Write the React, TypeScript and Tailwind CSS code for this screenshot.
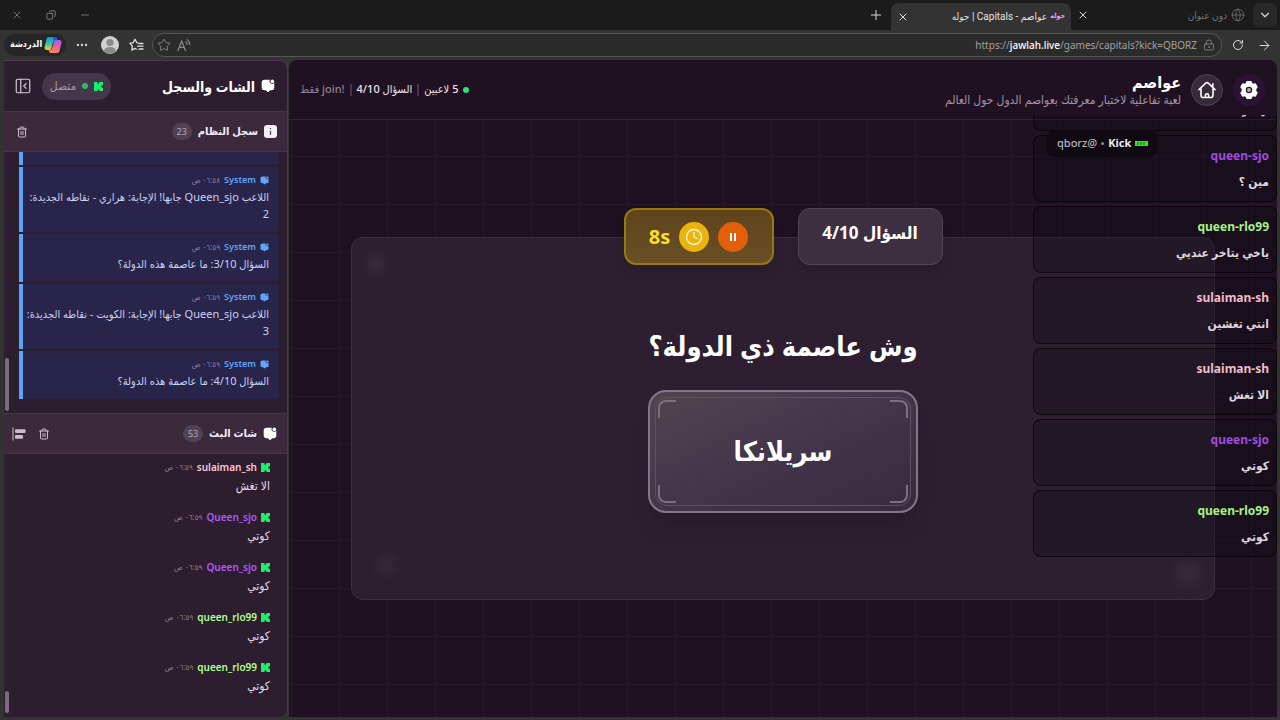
import React from 'react';
import {
    ArrowRight,
    ChevronDown,
    Clock,
    Copy,
    Ellipsis,
    Globe,
    LockKeyhole,
    Minus,
    PanelLeftClose,
    Plus,
    RotateCw,
    Star,
    Trash2,
    X,
} from 'lucide-react';

interface ChatMessage {
    name: string;
    text: string;
    color: string;
}

interface SystemMessage {
    time: string;
    text: string;
}

const QUESTION = 'السؤال 4/10';

const systemLog: SystemMessage[] = [
    { time: '٠٦:٥٨ ص', text: 'اللاعب Queen_sjo جابها! الإجابة: هراري - نقاطه الجديدة: 2' },
    { time: '٠٦:٥٩ ص', text: 'السؤال 3/10: ما عاصمة هذه الدولة؟' },
    { time: '٠٦:٥٩ ص', text: 'اللاعب Queen_sjo جابها! الإجابة: الكويت - نقاطه الجديدة: 3' },
    { time: '٠٦:٥٩ ص', text: 'السؤال 4/10: ما عاصمة هذه الدولة؟' },
];

const streamChat: ChatMessage[] = [
    { name: 'sulaiman_sh', text: 'الا تغش', color: 'text-[#ffc9d6]' },
    { name: 'Queen_sjo', text: 'كوتي', color: 'text-[#b25af5]' },
    { name: 'Queen_sjo', text: 'كوتي', color: 'text-[#b25af5]' },
    { name: 'queen_rlo99', text: 'كوتي', color: 'text-[#b5ff8f]' },
    { name: 'queen_rlo99', text: 'كوتي', color: 'text-[#b5ff8f]' },
];

const overlayChat: ChatMessage[] = [
    { name: 'queen-sjo', text: 'مين ؟', color: 'text-[#a04ddb]' },
    { name: 'queen-rlo99', text: 'ياخي يتاخر عنديي', color: 'text-[#a6f285]' },
    { name: 'sulaiman-sh', text: 'انتي تغشين', color: 'text-[#f0bccb]' },
    { name: 'sulaiman-sh', text: 'الا تغش', color: 'text-[#f0bccb]' },
    { name: 'queen-sjo', text: 'كوتي', color: 'text-[#a04ddb]' },
    { name: 'queen-rlo99', text: 'كوتي', color: 'text-[#a6f285]' },
];

function KickIcon({ className }: { className?: string }) {
    return (
        <svg viewBox="0 0 10 10" className={className} fill="#1bf06c" aria-hidden="true">
            <path d="M0 0h4v2.200h1V1h1V0h4v3.300H9v1H8v1.400h1v1h1V10H6V9H5V7.800H4V10H0z" />
        </svg>
    );
}

function ChatBubbleIcon({ className }: { className?: string }) {
    return (
        <svg viewBox="0 0 14 14" className={className} fill="currentColor" aria-hidden="true">
            <path d="M3.500.8h5.500a2.400 2.400 0 0 0 4.300 2.800v4.900a2.800 2.800 0 0 1-2.800 2.800H9.200L7 13.300l-2.200-2H3.500A2.800 2.800 0 0 1 .7 8.500V3.600A2.800 2.800 0 0 1 3.500.8z" />
            <circle cx="11.300" cy="2.400" r="1.800" />
        </svg>
    );
}

function CopilotIcon() {
    return (
        <svg viewBox="0 0 18 18" className="size-[18px]" aria-hidden="true">
            <defs>
                <linearGradient id="copilot-a" x1="0" y1="0" x2="0" y2="1">
                    <stop offset="0" stopColor="#1b8df2" />
                    <stop offset=".5" stopColor="#2fc5a0" />
                    <stop offset="1" stopColor="#f3d02f" />
                </linearGradient>
                <linearGradient id="copilot-b" x1="0" y1="0" x2="0" y2="1">
                    <stop offset="0" stopColor="#a35cf5" />
                    <stop offset=".5" stopColor="#ef5ba1" />
                    <stop offset="1" stopColor="#fd8a4b" />
                </linearGradient>
            </defs>
            <path d="M5 1h6c1.300 0 1.800.9 2.100 2l.5 1.700h-2.400c-1.300 0-1.900.8-2.300 2L7.500 12c-.4 1.300-1 2-2.300 2H3C1.100 14 .2 12.700.6 11L2.400 3.200C2.800 1.800 3.700 1 5 1z" fill="url(#copilot-a)" />
            <path d="M13 17H7c-1.300 0-1.800-.9-2.100-2l-.3-1h1.200c1.300 0 2-.8 2.400-2L9.900 6c.4-1.300 1-2 2.300-2H15c1.900 0 2.800 1.300 2.400 3l-1.800 7.800C15.200 16.200 14.300 17 13 17z" fill="url(#copilot-b)" />
            <path d="M9 1h2c1.300 0 1.800.9 2.100 2l.4 1.200h-2c-1.100 0-1.600.4-2 1.200z" fill="#2456d6" />
        </svg>
    );
}

function GearIcon() {
    return (
        <svg viewBox="0 0 20 20" className="size-5" aria-hidden="true">
            <path
                fill="currentColor"
                d="M7.300 1.600a1 1 0 0 1 1-.7h3.400a1 1 0 0 1 1 .7l.5 1.500 1 .6 1.600-.4a1 1 0 0 1 1.100.5l1.600 2.800a1 1 0 0 1-.1 1.200L17.300 9v2l1.100 1.200a1 1 0 0 1 .1 1.200l-1.600 2.800a1 1 0 0 1-1.100.5l-1.600-.4-1 .6-.5 1.500a1 1 0 0 1-1 .7H8.300a1 1 0 0 1-1-.7l-.5-1.500-1-.6-1.600.4a1 1 0 0 1-1.100-.5l-1.600-2.800a1 1 0 0 1 .1-1.200L2.700 11V9L1.600 7.800a1 1 0 0 1-.1-1.200l1.600-2.800a1 1 0 0 1 1.100-.5l1.600.4 1-.6z"
            />
            <circle cx="10" cy="10" r="2.600" fill="#b9aabd" stroke="#2b1433" strokeWidth="1.300" />
        </svg>
    );
}

function HomeIcon() {
    return (
        <svg viewBox="0 0 20 20" className="size-5" fill="none" stroke="currentColor" strokeWidth="1.600" strokeLinecap="round" strokeLinejoin="round" aria-hidden="true">
            <path d="M2 9.600 8.700 3.200a1.900 1.900 0 0 1 2.600 0L18 9.600M15.800 7.300V3.800M4 8.400v6.800a2.300 2.300 0 0 0 2.300 2.300h7.400a2.300 2.300 0 0 0 2.300-2.300V8.400M8.400 17.300v-2a1.600 1.600 0 0 1 3.200 0v2" />
        </svg>
    );
}

function TabBar() {
    return (
        <div className="flex h-[30px] shrink-0 items-center bg-[#1b1b1b] pr-[3px] text-[#d8d8d8]">
            <button type="button" aria-label="Tab list" className="flex h-6 w-6 items-center justify-center rounded-md bg-[#282828]">
                <ChevronDown className="size-3.5" />
            </button>
            <div className="flex h-full w-[182px] items-center gap-1 pr-2 text-[10px] text-[#777]">
                <Globe className="size-3.5" strokeWidth={1.3} />
                <span className="flex-1">دون عنوان</span>
                <button type="button" aria-label="Close tab" className="flex w-6 justify-center text-[#d8d8d8]">
                    <X className="size-3" />
                </button>
            </div>
            <div className="flex h-[27px] w-[180px] items-center gap-1 self-end rounded-t-lg bg-[#333] pr-1.5 text-[10px] text-[#e4e4e4]">
                <span className="w-3.5 text-center text-[7px] font-bold text-[#e2a8f0]">جوله</span>
                <span className="flex-1">عواصم - Capitals | جوله</span>
                <button type="button" aria-label="Close tab" className="flex w-6 justify-center">
                    <X className="size-3" />
                </button>
            </div>
            <button type="button" aria-label="New tab" className="flex w-[30px] justify-center">
                <Plus className="size-4" strokeWidth={1.5} />
            </button>
            <div className="mr-auto flex items-center text-[#8d8d8d]">
                <button type="button" aria-label="Minimize" className="flex w-[34px] justify-center">
                    <Minus className="size-3" strokeWidth={1.5} />
                </button>
                <button type="button" aria-label="Restore" className="flex w-[34px] justify-center">
                    <Copy className="size-2.5 -scale-x-100" />
                </button>
                <button type="button" aria-label="Close" className="flex w-[34px] justify-center">
                    <X className="size-3" strokeWidth={1.5} />
                </button>
            </div>
        </div>
    );
}

function Toolbar() {
    return (
        <div className="flex h-[30px] shrink-0 items-center bg-[#333] pr-2 pl-1 text-[#dcdcdc]">
            <button type="button" aria-label="Back" className="flex w-[15px] justify-center">
                <ArrowRight className="size-[15px]" strokeWidth={1.6} />
            </button>
            <button type="button" aria-label="Reload" className="mr-3 flex w-[15px] justify-center">
                <RotateCw className="size-3" />
            </button>
            <div dir="ltr" className="mr-2 flex h-6 flex-1 items-center rounded-full border border-[#565656] bg-[#2b2b2b] px-1 text-[#8a8a8a]">
                <Star className="size-3.5" strokeWidth={1.5} />
                <svg viewBox="0 0 14 14" className="ml-1.5 size-3.5" fill="none" stroke="currentColor" strokeWidth="1.200" strokeLinecap="round" aria-hidden="true">
                    <path d="M1 12.500 4.700 3 8.400 12.500M2.300 9.300h4.800M8.800 3.600a3 3 0 0 1 1.100 2.600M10.300 1.600a6 6 0 0 1 2.300 4.800" />
                </svg>
                <span className="ml-auto font-['Noto_Sans',sans-serif] text-[10px] text-[#a0a0a0]">
                    https://<span className="font-medium text-white">jawlah.live</span>/games/capitals?kick=QBORZ
                </span>
                <LockKeyhole className="mr-0.5 ml-1.5 size-3" strokeWidth={1.6} />
            </div>
            <button type="button" aria-label="Favorites" className="mr-2 flex w-[15px] justify-center">
                <svg viewBox="0 0 15 15" className="size-[15px]" fill="none" stroke="currentColor" strokeWidth="1.300" strokeLinecap="round" strokeLinejoin="round" aria-hidden="true">
                    <path d="M9 4.900 7.800 4.700 6 1.200 4.200 4.700.9 5.300l2.400 2.600-.5 4.200L6 10.400l1.400.8M10 5.500h4M8.600 8.200H14M10 11h4" />
                </svg>
            </button>
            <button type="button" aria-label="Profile" className="mr-2.5 size-[18px] overflow-hidden rounded-full bg-[#d0d0d0]">
                <svg viewBox="0 0 18 18" className="size-[18px]" fill="#8a8a8a" aria-hidden="true">
                    <circle cx="9" cy="6.500" r="3.600" />
                    <path d="M3 15.500c0-3 2.500-4.500 6-4.500s6 1.500 6 4.500a9 9 0 0 1-12 0z" />
                </svg>
            </button>
            <button type="button" aria-label="More" className="mr-3 flex w-[15px] justify-center">
                <Ellipsis className="size-3.5" />
            </button>
            <button type="button" className="mr-2 flex h-[22px] w-[62px] items-center justify-between rounded-xl bg-[#262626] pr-1 pl-1.5 text-[9px] font-semibold text-white">
                <CopilotIcon />
                الدردشة
            </button>
        </div>
    );
}

function SectionHeader({ icon, title, count, children }: { icon: React.ReactNode; title: string; count: number; children: React.ReactNode }) {
    return (
        <div className="flex h-[41px] shrink-0 items-center gap-1.5 border-y border-[#453548] bg-[#3a2a3b] pr-2.5 pl-2 text-[#f3eaf5]">
            {icon}
            <h3 className="text-[11px] font-bold">{title}</h3>
            <span className="flex h-[17px] w-5 items-center justify-center rounded-full bg-[#514253] text-[9px] text-[#b7a9ba]">{count}</span>
            <div className="mr-auto flex items-center gap-3 text-[#cbbdce]">{children}</div>
        </div>
    );
}

function Sidebar() {
    return (
        <aside className="flex w-[284px] shrink-0 flex-col overflow-hidden rounded-r-lg border-t border-r border-[#4a3b4c] bg-[#2d1e2f]">
            <div className="flex h-[50px] shrink-0 items-center gap-1.5 pr-3 pl-2.5">
                <ChatBubbleIcon className="size-3.5 text-white" />
                <h2 className="text-[14px] font-bold text-white">الشات والسجل</h2>
                <div className="mr-auto flex h-[27px] w-[69px] items-center justify-center gap-1.5 rounded-full bg-[#45364a] text-[12px] text-[#a899ac]">
                    <KickIcon className="size-[9px]" />
                    <span className="size-1.5 rounded-full bg-[#35b866]" />
                    متصل
                </div>
                <button type="button" aria-label="Collapse panel" className="mr-1 text-[#d5c8d8]">
                    <PanelLeftClose className="size-[18px]" strokeWidth={1.6} />
                </button>
            </div>

            <SectionHeader
                title="سجل النظام"
                count={23}
                icon={
                    <svg viewBox="0 0 13 13" className="size-[13px]" aria-hidden="true">
                        <rect width="13" height="13" rx="3" fill="#f6eef8" />
                        <path d="M6.500 3v1.300M6.500 5.800V10" stroke="#655568" strokeWidth="1.300" />
                    </svg>
                }
            >
                <button type="button" aria-label="Clear log" className="ml-1">
                    <Trash2 className="size-3" />
                </button>
            </SectionHeader>

            <div className="relative flex h-[261px] shrink-0 flex-col overflow-hidden pr-2 pl-[15px]">
                {/* tail of the entry scrolled out above */}
                <div className="mb-0.5 h-[13px] shrink-0 rounded-br border-l-4 border-[#5ca4f8] bg-[#28244a]" />
                <ul className="flex flex-col gap-0.5">
                    {systemLog.map((entry, i) => (
                        <li key={i} className="rounded-r border-l-4 border-[#5ca4f8] bg-[#28244a] pt-1.5 pr-2.5 pb-2.5">
                            <div className="flex items-center gap-1 text-[9px] leading-[14px]">
                                <ChatBubbleIcon className="size-[9px] text-[#60a5fa]" />
                                <span className="font-semibold text-[#60a5fa]">System</span>
                                <span className="text-[8px] text-[#8c80a0]">{entry.time}</span>
                            </div>
                            <p className="mt-px text-[11px] leading-[17px] text-[#c8d2f5]">{entry.text}</p>
                        </li>
                    ))}
                </ul>
                <span className="absolute bottom-0.5 left-px h-[53px] w-1 rounded-full bg-[#7c6d7e]" />
            </div>

            <SectionHeader title="شات البث" count={53} icon={<ChatBubbleIcon className="size-3.5 text-white" />}>
                <button type="button" aria-label="Clear chat">
                    <Trash2 className="size-3" />
                </button>
                <button type="button" aria-label="Align chat">
                    <svg viewBox="0 0 14 14" className="size-3.5" fill="currentColor" aria-hidden="true">
                        <path d="M.5.500h1v13h-1z" />
                        <rect x="3" y="2.300" width="10.500" height="3.800" rx="1" />
                        <rect x="3" y="8" width="8" height="3.800" rx="1" />
                    </svg>
                </button>
            </SectionHeader>

            <div className="relative flex-1 overflow-hidden pt-[5px] pr-[17px]">
                <ul className="flex flex-col gap-3">
                    {streamChat.map((msg, i) => (
                        <li key={i}>
                            <div className="flex h-4 items-center gap-1 text-[10px]">
                                <KickIcon className="size-[9px]" />
                                <span className={`font-semibold ${msg.color}`}>{msg.name}</span>
                                <span className="text-[8px] text-[#8d7f90]">٠٦:٥٩ ص</span>
                            </div>
                            <p className="h-[22px] text-[12px] leading-[21px] text-[#e5dce8]">{msg.text}</p>
                        </li>
                    ))}
                </ul>
                <span className="absolute bottom-1 left-px h-[22px] w-1 rounded-full bg-[#7c6d7e]" />
            </div>
        </aside>
    );
}

function GameHeader() {
    return (
        <header className="flex h-[60px] shrink-0 items-center border-b border-[#33233a] pr-3 pl-[11px]">
            <button type="button" aria-label="Settings" className="flex size-8 items-center justify-center rounded-full bg-[#2b1433] text-white">
                <GearIcon />
            </button>
            <button type="button" aria-label="Home" className="mr-2.5 flex size-8 items-center justify-center rounded-full border border-[#504053] bg-[#382a3b] text-white">
                <HomeIcon />
            </button>
            <div className="mr-2.5">
                <h1 className="text-[16px] leading-5 font-bold text-white">عواصم</h1>
                <p className="text-[12px] leading-4 text-[#a193a5]">لعبة تفاعلية لاختبار معرفتك بعواصم الدول حول العالم</p>
            </div>
            <div className="mr-auto flex items-center gap-[5px] text-[11px] font-medium text-[#eee6f0]">
                <span className="size-1.5 rounded-full bg-[#2fe277]" />
                <span>5 لاعبين</span>
                <span className="h-3 w-0.5 bg-[#453748]" />
                <span>{QUESTION}</span>
                <span className="h-3 w-0.5 bg-[#453748]" />
                <span className="text-[#8f8194]">
                    <bdi>join!</bdi> فقط
                </span>
            </div>
        </header>
    );
}

function StreamOverlay() {
    return (
        <div className="absolute top-[55px] right-0 z-20 flex w-[244px] flex-col overflow-hidden">
            {/* message leaving the top of the feed */}
            <div className="mb-1 flex h-4 items-end rounded-b-lg border border-t-0 border-black/60 bg-[#0c0a10]/30 px-2">
                <svg viewBox="0 0 28 16" className="h-4 w-7" stroke="#ddd5df" strokeWidth="1.500" strokeLinecap="round" fill="none" aria-hidden="true">
                    <path d="M2.500 2q2 .2 3-1M22 1.500h2" />
                </svg>
            </div>
            <ul className="flex flex-col gap-1">
                {overlayChat.map((msg, i) => (
                    <li key={i} className="flex h-[67px] flex-col rounded-lg border border-black/60 bg-[#0c0a10]/30 px-[7px] pt-2">
                        <span className={`text-[12px] leading-6 font-bold ${msg.color}`}>{msg.name}</span>
                        <span className="text-[12px] leading-7 font-bold text-[#ddd5df]">{msg.text}</span>
                    </li>
                ))}
            </ul>
            <div className="absolute top-[15px] left-3.5 flex h-[27px] items-center gap-1 rounded-lg bg-[#0f0912] px-2.5 text-[11px] text-[#b9b2bc]">
                <svg viewBox="0 0 13 5" className="h-[5px] w-[13px]" aria-hidden="true">
                    <rect width="13" height="5" fill="#2fe51c" />
                    <path d="M3 1v3M6 1v3M9 1v3" stroke="#0f6c0b" strokeWidth="1" />
                </svg>
                <span className="font-bold text-[#ece8ee]">Kick</span>
                <span className="size-[3px] rounded-full bg-[#8f8892]" />
                <span className="font-medium">@qborz</span>
            </div>
        </div>
    );
}

function Game() {
    return (
        <main className="relative flex min-w-0 flex-1 flex-col rounded-t-lg bg-[#1f1121]">
            <GameHeader />
            <div className="flex flex-1 flex-col items-center bg-[linear-gradient(to_right,#29172c_1px,transparent_1px),linear-gradient(to_bottom,#29172c_1px,transparent_1px)] bg-[size:48px_48px] bg-[position:2px_36px] px-[62px] pt-[88px]">
                <div className="relative z-10 -mb-7 flex gap-6">
                    <div className="flex h-[57px] w-[145px] justify-center rounded-xl border border-[#534456] bg-[#3d2f40] pt-3 text-[17px] leading-6 font-bold text-white shadow-lg">
                        {QUESTION}
                    </div>
                    <div className="flex h-[57px] w-[150px] items-center justify-center gap-[9px] rounded-xl border-2 border-[#98790f] bg-linear-to-b from-[#5f441b] to-[#694f26] shadow-lg">
                        <button type="button" aria-label="Pause" className="flex size-[30px] items-center justify-center gap-0.5 rounded-full bg-[#e2600c]">
                            <span className="h-2 w-0.5 bg-white" />
                            <span className="h-2 w-0.5 bg-white" />
                        </button>
                        <span className="flex size-[30px] items-center justify-center rounded-full bg-[#e9b40c] text-[#fff6d8]">
                            <Clock className="size-[18px]" strokeWidth={1.7} />
                        </span>
                        <span className="text-[20px] font-bold text-[#fbe02a]" dir="ltr">8s</span>
                    </div>
                </div>

                <section className="relative flex w-full max-w-[864px] flex-col items-center rounded-xl border border-[#3d2e40] bg-[#2d1f30] pt-[86px] pb-[86px]">
                    <h2 className="text-[27px] leading-[44px] font-bold text-white">وش عاصمة ذي الدولة؟</h2>
                    <div className="relative mt-[22px] flex h-[123px] w-[270px] items-center justify-center rounded-[18px] border-2 border-[#85758a] bg-linear-to-br from-[#51454f] via-[#43354a] to-[#392a3d] shadow-xl">
                        <span className="absolute inset-[5px] rounded-xl border border-[#5f5062]" />
                        <span className="absolute top-2 left-2 size-[18px] rounded-tl-lg border-t-2 border-l-2 border-[#7d6e81]" />
                        <span className="absolute top-2 right-2 size-[18px] rounded-tr-lg border-t-2 border-r-2 border-[#7d6e81]" />
                        <span className="absolute bottom-2 left-2 size-[18px] rounded-bl-lg border-b-2 border-l-2 border-[#7d6e81]" />
                        <span className="absolute right-2 bottom-2 size-[18px] rounded-br-lg border-r-2 border-b-2 border-[#7d6e81]" />
                        <span className="text-[27px] font-bold text-white">سريلانكا</span>
                    </div>
                    <span className="absolute top-3.5 left-3 size-6 rounded-full bg-[#352738] blur-xs" />
                    <span className="absolute bottom-6 left-6 size-5 rounded-full bg-[#352738] blur-xs" />
                    <span className="absolute right-3 bottom-3 size-7 rounded-full bg-[#352738] blur-xs" />
                </section>
            </div>
            <StreamOverlay />
        </main>
    );
}

export default function App() {
    return (
        <div dir="rtl" className="flex h-screen flex-col overflow-hidden bg-[#333] font-['Noto_Sans','DejaVu_Sans_Condensed','DejaVu_Sans',sans-serif]">
            <div className="shrink-0 font-['Roboto','DejaVu_Sans_Condensed','DejaVu_Sans',sans-serif]">
                <TabBar />
                <Toolbar />
            </div>
            <div className="flex min-h-0 flex-1 gap-px pr-[3px] pb-[3px] pl-1">
                <Game />
                <Sidebar />
            </div>
        </div>
    );
}
